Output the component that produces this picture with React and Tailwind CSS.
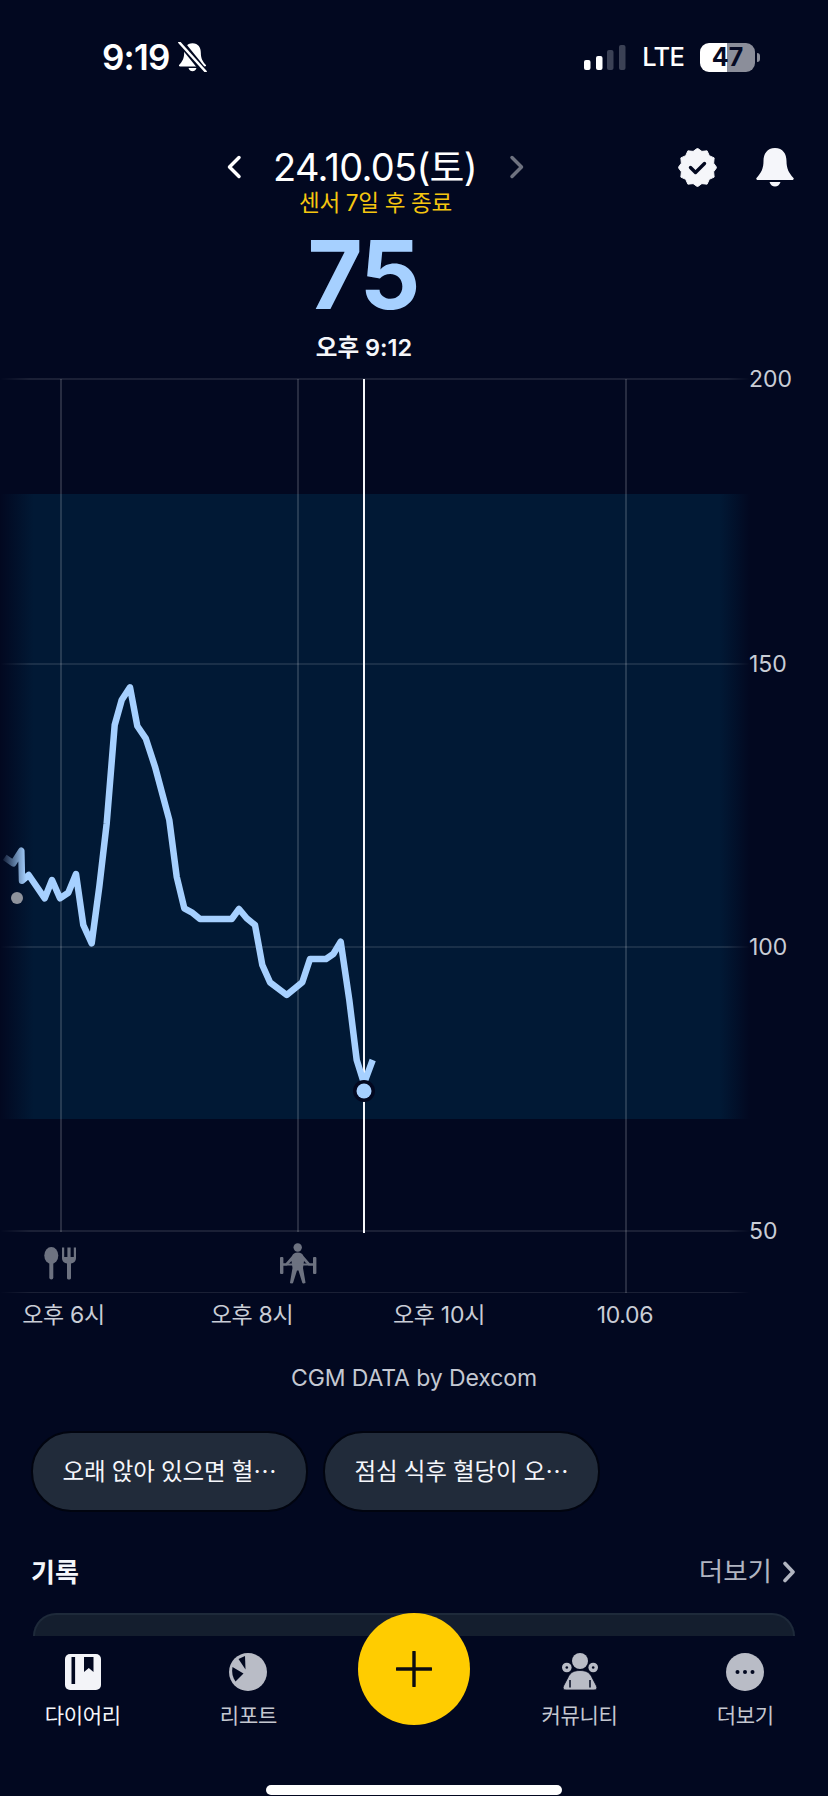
import React from "react";

const font = { fontFamily: '"Inter","Noto Sans CJK KR","Noto Sans",sans-serif' };

const raw = [[14,592],[40,610],[64,572],[66,662],[86,645],[134,715],[156,660],[180,715],[205,698],[228,642],[250,795],[275,850],[298,680],[320,490],[344,195],[365,120],[390,82],[412,198],[437,235],[465,320],[508,480],[530,650],[553,745],[575,757],[600,777],[695,777],[717,747],[740,775],[765,795],[787,915],[810,967],[860,1005],[907,967],[930,897],[978,897],[1000,882],[1022,845],[1048,1020],[1070,1200],[1092,1270],[1118,1200]];
const curve = raw.map(([x, y]) => `${(x / 3).toFixed(1)},${(660 + y / 3).toFixed(1)}`).join(" ");

const BELL = "M20 1C12 1 8.5 7 8.5 14C8.5 22 6 26 1.5 31C.8 32 1.5 33 3 33H37C38.5 33 39.2 32 38.5 31C34 26 31.5 22 31.5 14C31.5 7 28 1 20 1ZM14.5 35H25.5C24.5 38 22.5 39.5 20 39.5C17.5 39.5 15.5 38 14.5 35Z";

const scallop = (() => {
  const n = 12, pts = [];
  for (let i = 0; i < n * 2; i++) {
    const r = i % 2 ? 16.7 : 19.2;
    const a = (Math.PI * i) / n - Math.PI / 2;
    pts.push(`${(19.5 + r * Math.cos(a)).toFixed(2)},${(19.5 + r * Math.sin(a)).toFixed(2)}`);
  }
  return pts.join(" ");
})();

function StatusBar() {
  return (
    <div className="h-[114px] flex items-center pl-[102px] pr-[68px] text-white">
      <span className="text-[35px] font-semibold tracking-[-0.8px] leading-none">9:19</span>
      <svg width="29" height="30" viewBox="0 0 40 40" className="ml-[8px]" fill="#fff">
        <path d={BELL} />
        <path d="M3 -1L37 41" stroke="#020820" strokeWidth="9" />
        <path d="M1 -1L39 41" stroke="#fff" strokeWidth="3.5" />
      </svg>
      <svg width="42" height="25" viewBox="0 0 42 25" className="ml-auto">
        <rect x="0" y="15" width="6.5" height="10" rx="2" fill="#fff" />
        <rect x="12" y="11" width="6.5" height="14" rx="2" fill="#fff" />
        <rect x="23" y="5" width="6.5" height="20" rx="2" fill="#3b4155" />
        <rect x="35" y="0" width="6.5" height="25" rx="2" fill="#3b4155" />
      </svg>
      <span className="ml-[16px] text-[25.5px] font-medium leading-none tracking-[-0.8px]">LTE</span>
      <div className="ml-[16px] flex items-center gap-[2px]">
        <div className="w-[55px] h-[29px] rounded-[9px] bg-[linear-gradient(90deg,#ffffff_49%,#8b8e9a_49%)] flex items-center justify-center text-[#050a24] text-[25px] font-bold leading-none">47</div>
        <div className="w-[3px] h-[9px] rounded-r-[3px] bg-[#8b8e9a]" />
      </div>
    </div>
  );
}

function Header() {
  return (
    <div className="h-[264px] flex flex-col">
      <div className="flex items-center h-[48px] mt-[29px] pl-[226px] pr-[33px]">
        <svg width="16" height="24" viewBox="0 0 16 24" fill="none" stroke="#fff" strokeWidth="3.5" strokeLinecap="round" strokeLinejoin="round"><path d="M13 2.5L3.5 12L13 21.5" /></svg>
        <span className="ml-[31px] text-[38px] text-white leading-none tracking-[-0.7px] whitespace-nowrap">24.10.05(토)</span>
        <svg width="16" height="24" viewBox="0 0 16 24" fill="none" stroke="#6e7280" strokeWidth="3.5" strokeLinecap="round" strokeLinejoin="round" className="ml-[32px]"><path d="M3 2.5L12.5 12L3 21.5" /></svg>
        <svg width="39" height="39" viewBox="0 0 39 39" className="ml-auto">
          <polygon points={scallop} fill="#f5f6fa" stroke="#f5f6fa" strokeWidth="1" strokeLinejoin="round" />
          <path d="M12.5 19.5L17.5 24.5L26.5 15.5" fill="none" stroke="#020820" strokeWidth="3.4" strokeLinecap="round" strokeLinejoin="round" />
        </svg>
        <svg width="40" height="40" viewBox="0 0 40 40" className="ml-[38px]" fill="#f5f6fa"><path d={BELL} /></svg>
      </div>
      <div className="ml-[299px] mt-[-1px] text-[22.5px] leading-[26px] text-[#f6c60f] tracking-[-0.3px] whitespace-nowrap">센서 7일 후 종료</div>
      <div className="ml-[295px] w-[136px] text-center mt-[13px] text-[95px] leading-[92px] font-bold text-[#a6d0ff] tracking-[-2px]">75</div>
      <div className="ml-[264px] w-[200px] text-center mt-[14px] text-[23.5px] leading-[26px] font-semibold text-[#f5f6fa]">오후 9:12</div>
    </div>
  );
}

function Chart() {
  return (
    <div className="relative h-[915px]">
      <svg width="828" height="915" viewBox="0 378 828 915" className="block">
        <defs>
          <linearGradient id="band" x1="0" x2="1" y1="0" y2="0">
            <stop offset="0" stopColor="#011935" stopOpacity="0" />
            <stop offset="0.045" stopColor="#011935" />
            <stop offset="0.96" stopColor="#011935" />
            <stop offset="1" stopColor="#011935" stopOpacity="0" />
          </linearGradient>
          <linearGradient id="hl" x1="0" x2="1" y1="0" y2="0">
            <stop offset="0" stopColor="#fff" stopOpacity="0" />
            <stop offset="0.04" stopColor="#fff" stopOpacity="0.13" />
            <stop offset="0.97" stopColor="#fff" stopOpacity="0.13" />
            <stop offset="1" stopColor="#fff" stopOpacity="0" />
          </linearGradient>
          <linearGradient id="curve" gradientUnits="userSpaceOnUse" x1="3" x2="26" y1="0" y2="0">
            <stop offset="0" stopColor="#a6d0ff" stopOpacity="0.1" />
            <stop offset="1" stopColor="#a6d0ff" />
          </linearGradient>
        </defs>
        <rect x="0" y="494" width="750" height="625" fill="url(#band)" />
        {[379, 664, 947, 1231, 1293].map((y) => (
          <rect key={y} x="0" y={y - 0.75} width="750" height="1.5" fill="url(#hl)" />
        ))}
        <rect x="60.25" y="379" width="1.5" height="853" fill="#fff" fillOpacity="0.2" />
        <rect x="297.25" y="379" width="1.5" height="853" fill="#fff" fillOpacity="0.2" />
        <rect x="625.25" y="379" width="1.5" height="914" fill="#fff" fillOpacity="0.2" />
        <rect x="363" y="379" width="2" height="854" fill="#f5f6fa" />
        <polyline points={curve} fill="none" stroke="url(#curve)" strokeWidth="6.5" strokeLinejoin="round" />
        <circle cx="17" cy="898" r="6" fill="#8f939c" />
        <circle cx="364" cy="1091" r="11" fill="#020820" />
        <circle cx="364" cy="1091" r="7.5" fill="#a6d0ff" />
        <g fill="#6d7280">
          <ellipse cx="51.3" cy="1255.5" rx="7" ry="8.5" />
          <rect x="49.3" y="1260" width="4" height="19.5" rx="2" />
          <path d="M62 1247.5H64.2V1257H67.4V1247.5H70.6V1257H73.8V1247.5H76V1258C76 1261.5 73.5 1263 71 1263.5V1278C71 1280 67 1280 67 1278V1263.5C64.5 1263 62 1261.5 62 1258Z" />
          <circle cx="297.7" cy="1247.5" r="4.2" />
          <path d="M297.7 1252.5C301 1252.5 302.5 1254 303.5 1256L310 1263.5H313V1265.5H308.5L304 1261L303 1268L305.5 1282.5C305.5 1283.5 302.5 1284 302.2 1282.5L298.5 1270.5H297L293.2 1282.5C292.8 1284 290 1283.5 290 1282.5L292.5 1268L291.5 1261L287 1265.5H282.5V1263.5H285.5L292 1256C293 1254 294.5 1252.5 297.7 1252.5Z" />
          <rect x="280" y="1257" width="3.4" height="17" rx="1" />
          <rect x="313" y="1257" width="3.4" height="17" rx="1" />
          <rect x="283" y="1263.5" width="30" height="2" />
        </g>
      </svg>
      <span className="absolute left-[749px] top-[-12px] text-[23px] leading-[26px] text-[#c9cdd6]">200</span>
      <span className="absolute left-[749px] top-[273px] text-[23px] leading-[26px] text-[#c9cdd6]">150</span>
      <span className="absolute left-[749px] top-[556px] text-[23px] leading-[26px] text-[#c9cdd6]">100</span>
      <span className="absolute left-[749px] top-[840px] text-[23px] leading-[26px] text-[#c9cdd6]">50</span>
    </div>
  );
}

function XAxis() {
  return (
    <div className="relative h-[46px] flex text-[23px] leading-[28px] text-[#c9cdd6] pt-[8px] whitespace-nowrap tracking-[-0.3px]">
      <span className="w-[127px] text-center">오후 6시</span>
      <span className="w-[250px] text-center">오후 8시</span>
      <span className="w-[124px] text-center">오후 10시</span>
      <span className="w-[248px] text-center">10.06</span>
    </div>
  );
}

function Pills() {
  const cls = "w-[277px] h-[81px] rounded-[40px] bg-[#212b3a] border-2 border-[#01040f] flex items-center justify-center text-[23.5px] text-[#f5f6fa] whitespace-nowrap tracking-[-0.2px]";
  return (
    <div className="flex gap-[15px] pl-[31px] mt-[39px]">
      <div className={cls}>오래 앉아 있으면 혈⋯</div>
      <div className={cls}>점심 식후 혈당이 오⋯</div>
    </div>
  );
}

function NavItem({ label, children, active }) {
  return (
    <div className="flex flex-col items-center">
      <div className="h-[40px] flex items-center justify-center">{children}</div>
      <span className={"mt-[11px] text-[21px] leading-[26px] tracking-[-0.3px] " + (active ? "text-[#f5f6fa]" : "text-[#c4c7d0]")}>{label}</span>
    </div>
  );
}

function Nav() {
  return (
    <div className="relative h-[174px] bg-[#020820] pt-[16px]">
      <div className="grid grid-cols-5">
        <NavItem label="다이어리" active>
          <svg width="36" height="36" viewBox="0 0 36 36">
            <rect width="36" height="36" rx="5" fill="#f3f4f8" />
            <rect x="6.5" y="3" width="3.6" height="27" fill="#020820" />
            <path d="M19 3H28.5V18L23.8 14L19 18Z" fill="#020820" />
          </svg>
        </NavItem>
        <NavItem label="리포트">
          <svg width="38" height="38" viewBox="0 0 38 38">
            <circle cx="19" cy="19" r="19" fill="#b9bcc6" />
            <path d="M9.5 6L16 3L16.5 16.5Z" fill="#020820" />
            <path d="M3.5 14L14.5 20.5L6.5 28.5C3.5 24.5 2.5 19 3.5 14Z" fill="#020820" />
          </svg>
        </NavItem>
        <div />
        <NavItem label="커뮤니티">
          <svg width="36" height="38" viewBox="0 0 36 38" fill="#b9bcc6">
            <circle cx="18" cy="8" r="8" />
            <circle cx="4.8" cy="14.5" r="4.8" />
            <circle cx="4.8" cy="14.5" r="1.3" fill="#020820" />
            <circle cx="31.2" cy="14.5" r="4.8" />
            <circle cx="31.2" cy="14.5" r="1.3" fill="#020820" />
            <path d="M18 17.5C24 17.5 27.5 19.5 29.5 23.5L34.5 33C35.5 35.5 34.5 37 32 37H4C1.5 37 .5 35.5 1.5 33L6.5 23.5C8.5 19.5 12 17.5 18 17.5Z" stroke="#020820" strokeWidth="0.8" />
            <path d="M8 27V34.5M28 27V34.5" stroke="#020820" strokeWidth="1.5" />
          </svg>
        </NavItem>
        <NavItem label="더보기">
          <svg width="38" height="38" viewBox="0 0 38 38">
            <circle cx="19" cy="19" r="19" fill="#b9bcc6" />
            <circle cx="11.5" cy="19" r="2" fill="#020820" />
            <circle cx="19" cy="19" r="2" fill="#020820" />
            <circle cx="26.5" cy="19" r="2" fill="#020820" />
          </svg>
        </NavItem>
      </div>
      <div className="absolute left-[266px] top-[149px] w-[296px] h-[10px] rounded-full bg-white" />
    </div>
  );
}

export default function App() {
  return (
    <div className="relative w-[828px] h-[1796px] overflow-hidden bg-[#020820]" style={font}>
      <StatusBar />
      <Header />
      <Chart />
      <XAxis />
      <div className="text-center text-[23px] leading-[28px] text-[#c4c8d2] mt-[25px] tracking-[-0.1px]">CGM DATA by Dexcom</div>
      <Pills />
      <div className="flex items-center justify-between pl-[31px] pr-[32px] h-[40px] mt-[40px]">
        <span className="text-[26px] font-bold text-[#f5f6fa]">기록</span>
        <span className="flex items-center gap-[10px] text-[26.5px] text-[#b1b5c0]">
          더보기
          <svg width="14" height="22" viewBox="0 0 14 22" fill="none" stroke="#b1b5c0" strokeWidth="3.6" strokeLinecap="round" strokeLinejoin="round"><path d="M3 2.5L11 11L3 19.5" /></svg>
        </span>
      </div>
      <div className="mx-[33px] h-[23px] mt-[21px] rounded-t-[38px] bg-[#141e2e] border-t-2 border-x-2 border-[#1e2a3a]" />
      <Nav />
      <div className="absolute left-[358px] top-[1613px] w-[112px] h-[112px] rounded-full bg-[#ffcc00] flex items-center justify-center">
        <svg width="36" height="36" viewBox="0 0 36 36" stroke="#0b0b12" strokeWidth="3.4" strokeLinecap="round"><path d="M18 1V35M1 18H35" /></svg>
      </div>
    </div>
  );
}
